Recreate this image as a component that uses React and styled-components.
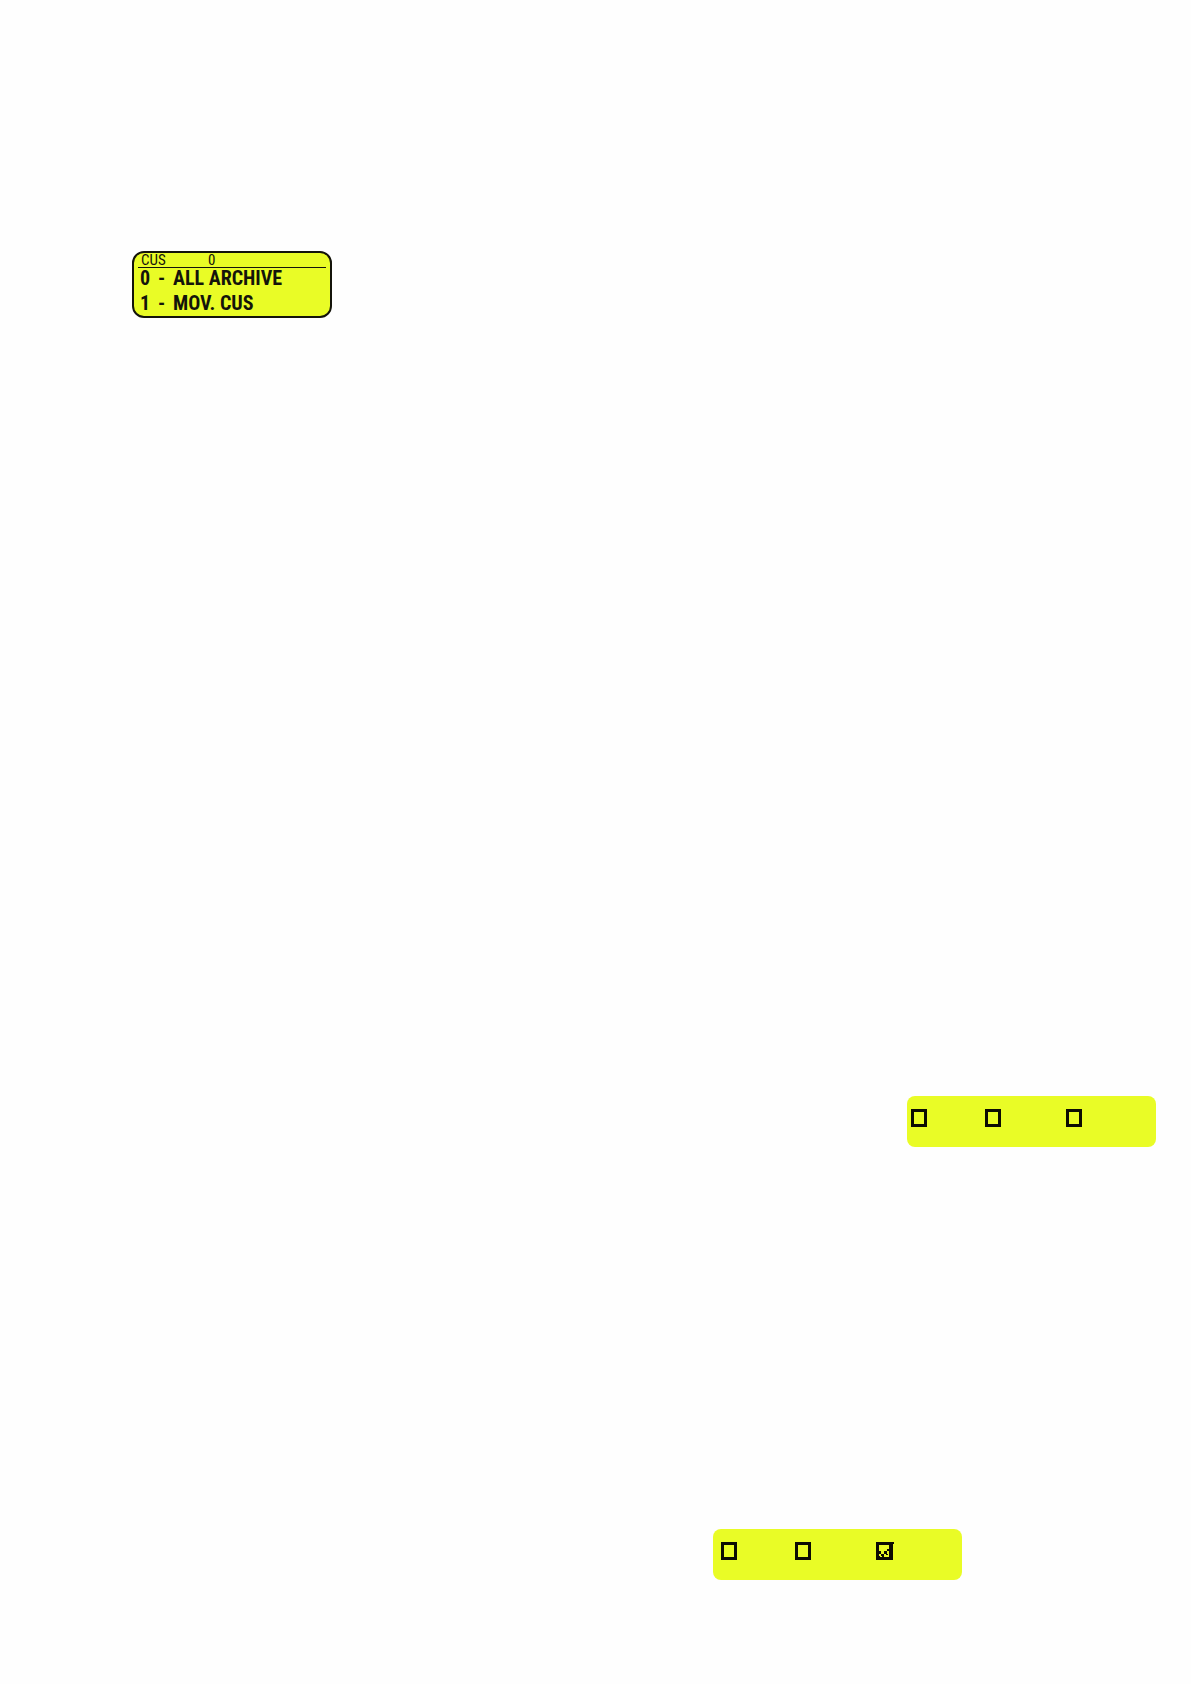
import React from 'react';
import styled, { createGlobalStyle } from 'styled-components';

const GlobalStyle = createGlobalStyle`
  body {
    margin: 0;
    background-color: #fefefe;
  }
`;

const Page = styled.main`
  display: flex;
  flex-direction: column;
  box-sizing: border-box;
  padding: 251px 35px 104px 132px;
  font-family: 'Roboto Condensed', Roboto, 'Liberation Sans', sans-serif;
  color: #14140a;
`;

const Display = styled.section`
  box-sizing: border-box;
  width: 200px;
  padding: 0 4px 3px;
  border: 2px solid #14140a;
  border-radius: 12px;
  background-color: #e9fc26;
`;

const DisplayHeader = styled.header`
  display: grid;
  grid-template-columns: 67px 1fr;
  padding-left: 3px;
  border-bottom: 1px solid #14140a;
  font-size: 15px;
  line-height: 14px;
`;

const Menu = styled.ul`
  display: grid;
  gap: 5px;
  margin: 0;
  padding: 0 0 0 2px;
  list-style: none;
`;

const MenuItem = styled.li`
  display: grid;
  grid-template-columns: 18px 15px 1fr;
  font-size: 20px;
  font-weight: bold;
  line-height: 20px;
  white-space: nowrap;
`;

const CheckPanel = styled.form`
  display: grid;
  grid-template-columns: 74px 81px 1fr;
  align-self: flex-end;
  box-sizing: border-box;
  width: 249px;
  height: 51px;
  margin-top: ${props => props.$top}px;
  margin-right: ${props => props.$right}px;
  padding: 13px 0 0 ${props => props.$inset}px;
  border-radius: 8px;
  background-color: #e9fc26;
`;

const CheckLabel = styled.label`
  position: relative;
  width: 16px;
  height: 18px;
`;

const CheckInput = styled.input`
  display: block;
  appearance: none;
  box-sizing: border-box;
  width: 16px;
  height: 18px;
  margin: 0;
  border: 3px solid #0c0c02;

  & + svg {
    display: none;
  }

  &:checked + svg {
    display: block;
  }
`;

const CheckMark = styled.svg`
  position: absolute;
  top: 0;
  left: 0;
  pointer-events: none;
`;

function CheckBox(props) {
  return (
    <CheckLabel>
      <CheckInput type="checkbox" aria-label={props.name} defaultChecked={props.checked} />
      <CheckMark width="18" height="18" viewBox="0 0 18 18" fill="#0c0c02" shapeRendering="crispEdges">
        <path d="M15 0h3v2h-1v16h-2z" />
        <path d="M3 9h2v3h-2zM5 12h3v2h-3zM6 14h2v2h-2zM3 14h1v2h-1zM8 9h3v3h-3zM11 7h3v2h-3zM13 5h3v2h-3zM10 12h2v1h-2zM13 12h3v4h-3z" />
      </CheckMark>
    </CheckLabel>
  );
}

const menuItems = [
  { key: '0', text: 'ALL ARCHIVE' },
  { key: '1', text: 'MOV. CUS' },
];

const panels = [
  { top: 778, right: 0, inset: 4, checks: [false, false, false] },
  { top: 382, right: 194, inset: 8, checks: [false, false, true] },
];

function App() {
  return (
    <Page>
      <GlobalStyle />
      <Display>
        <DisplayHeader>
          <span>CUS</span>
          <span>0</span>
        </DisplayHeader>
        <Menu>
          {menuItems.map(item => (
            <MenuItem key={item.key}>
              <span>{item.key}</span>
              <span>-</span>
              <span>{item.text}</span>
            </MenuItem>
          ))}
        </Menu>
      </Display>
      {panels.map(panel => (
        <CheckPanel key={panel.top} $top={panel.top} $right={panel.right} $inset={panel.inset}>
          {panel.checks.map((checked, i) => (
            <CheckBox key={i} name={`Option ${i + 1}`} checked={checked} />
          ))}
        </CheckPanel>
      ))}
    </Page>
  );
}

export default App;
